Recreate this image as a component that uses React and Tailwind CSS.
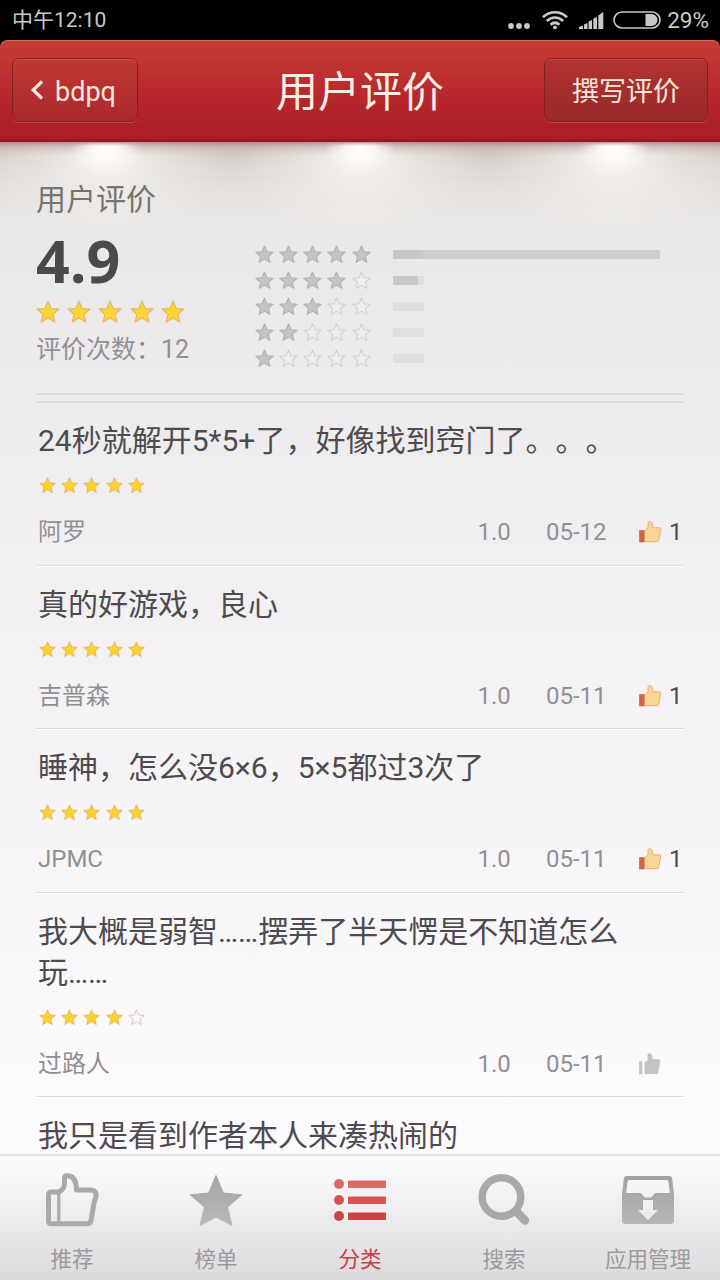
const STAR = 'M12 1.2l3.1 7.2 7.9.7-6 5.2 1.8 7.7-6.8-4.1L5.2 22 7 14.3 1 9.1l7.9-.7z'

const distribution = [
  { stars: 5, bar: 'w-[267px] bg-gradient-to-r from-[#c8c6c9] from-10% to-[#cfcdd0] to-12%' },
  { stars: 4, bar: 'w-[31px] bg-gradient-to-r from-[#c8c6c9] from-78% to-[#e0dee1] to-82%' },
  { stars: 3, bar: 'w-[31px] bg-[#e0dee1]' },
  { stars: 2, bar: 'w-[31px] bg-[#e0dee1]' },
  { stars: 1, bar: 'w-[31px] bg-[#e0dee1]' },
]

const reviews = [
  { text: '24秒就解开5*5+了，好像找到窍门了。。。', rating: 5, user: '阿罗', version: '1.0', date: '05-12', likes: 1 },
  { text: '真的好游戏，良心', rating: 5, user: '吉普森', version: '1.0', date: '05-11', likes: 1 },
  { text: '睡神，怎么没6×6，5×5都过3次了', rating: 5, user: 'JPMC', version: '1.0', date: '05-11', likes: 1 },
  { text: '我大概是弱智……摆弄了半天愣是不知道怎么玩……', rating: 4, user: '过路人', version: '1.0', date: '05-11', likes: 0 },
  { text: '我只是看到作者本人来凑热闹的' },
]

const Star = ({ className }) => (
  <svg viewBox="0 0 24 24" className={className} strokeWidth="1.3" strokeLinejoin="round">
    <path d={STAR} />
  </svg>
)

const Stars = ({ rating, size, gap, on, off }) => (
  <div className={`flex ${gap}`}>
    {[1, 2, 3, 4, 5].map((n) => (
      <Star key={n} className={`${size} shrink-0 ${n <= rating ? on : off}`} />
    ))}
  </div>
)

const ThumbIcon = ({ liked }) => (
  <svg viewBox="0 0 24 24" className="h-6 w-6">
    <path
      d={
        liked
          ? 'M6.500 10.500l3.600-2.300V3.200c0-2.400 3.800-2 4.200.8l.4 3.800h6.800c1.200 0 1.600.7 1.300 1.700l-2.300 11c-.2.8-.6 1.200-1.400 1.200H6.500z'
          : 'M7 10.500l3-2.300V3.200c0-2.400 3.400-2 3.800.8l.4 3.800h6.300c1.200 0 1.600.7 1.300 1.700l-2 11c-.2.800-.6 1.200-1.400 1.200H7z'
      }
      fill={liked ? '#fbd795' : '#c4c2c5'}
      stroke={liked ? '#e3aa70' : '#c4c2c5'}
      strokeWidth="0.9"
    />
    <path d={liked ? 'M1.500 10.500H6V22H1.500z' : 'M1.500 9.500H4V22H1.500z'} fill={liked ? '#d4604e' : '#c4c2c5'} stroke={liked ? '#bd6c55' : '#c4c2c5'} strokeWidth="0.7" />
  </svg>
)

const StatusBar = () => (
  <div className="flex h-10 shrink-0 items-center justify-between bg-black pl-3 pr-3 text-[#c9c9c9]">
    <span className="pt-0.5 text-[21px]">中午12:10</span>
    <div className="flex items-center">
      <svg viewBox="0 0 22 6" className="mr-3 mt-3 h-1.5 w-[22px]" fill="currentColor">
        <circle cx="3" cy="3" r="2.9" />
        <circle cx="11" cy="3" r="2.9" />
        <circle cx="19" cy="3" r="2.9" />
      </svg>
      <svg viewBox="0 0 26 20" className="mr-[11px] h-5 w-[26px]" fill="none" stroke="currentColor" strokeWidth="2.7">
        <path d="M1 7.2c7-6.6 17-6.6 24 0M4.8 11c5-4.7 11.4-4.700 16.4 0M8.500 14.700c3-2.600 6-2.600 9 0" />
        <circle cx="13" cy="17.4" r="1.9" fill="currentColor" stroke="none" />
      </svg>
      <svg viewBox="0 0 25 17" className="mr-[9px] h-[17px] w-[25px]" fill="currentColor">
        <path d="M0 17v-2l4-1.500V17zM5 17v-4.500l3.500-1.500v6zM9.600 17V9.500L13 8v9zM14.300 17V6.500L18 5v12zM19.300 17V3.500l5-3.500v17z" />
      </svg>
      <svg viewBox="0 0 48 18" className="mr-[6px] h-[18px] w-12">
        <rect x="1" y="1" width="46" height="16" rx="8" fill="none" stroke="currentColor" strokeWidth="1.6" />
        <path d="M32.500 3h6a6 6 0 0 1 0 12h-6z" fill="currentColor" />
      </svg>
      <span className="-mr-px pt-0.5 text-[22.500px]">29%</span>
    </div>
  </div>
)

const Header = () => (
  <div className="shrink-0 bg-black">
    <header className="relative z-10 flex h-[102px] items-center justify-between rounded-t-[8px] border-b-[3px] border-[#8f1a20] bg-gradient-to-b from-[#c53d33] via-[#b92a2e] to-[#ab1c25] px-3 shadow-[inset_0_1px_0_#d66a5f]">
      <button className="flex h-16 w-[126px] items-center rounded-[7px] border border-[#85201f] bg-gradient-to-b from-[#bd3831] to-[#ac292d] pl-[17px] text-[27px] text-[#fde6dc] shadow-[inset_0_1px_0_#cc5148,0_1px_0_#c24a45]">
        <svg viewBox="0 0 14 20" className="mr-[11px] h-5 w-3.5" fill="none" stroke="currentColor" strokeWidth="3.2">
          <path d="M12 1.500L3.200 10l8.800 8.500" />
        </svg>
        <span className="pt-1.5">bdpq</span>
      </button>
      <h1 className="absolute left-1/2 -translate-x-1/2 pt-1.5 text-[42px] text-[#fdeee6]">用户评价</h1>
      <button className="flex h-16 w-[164px] items-center justify-center rounded-[7px] border border-[#85201f] bg-gradient-to-b from-[#b23430] to-[#98282a] pt-1.5 text-[27px] text-[#fde6dc] shadow-[inset_0_1px_0_#bf4b43,0_1px_0_#c24a45]">
        撰写评价
      </button>
    </header>
  </div>
)

const Summary = () => (
  <section className="mx-9 flex h-[253px] items-start border-b-2 border-[#dddbde] pt-9">
    <div className="w-[218px]">
      <h2 className="text-[30px] leading-[44px] text-[#77736f]">用户评价</h2>
      <div className="-mt-1 font-['Open_Sans'] text-[59px] font-bold leading-[84px] text-[#4b494c]">4.9</div>
      <div className="-mt-[2px]">
        <Stars rating={5} size="h-6 w-6" gap="gap-[7.2px]" on="fill-[#fdd531] stroke-[#e8ba6a]" off="fill-none stroke-[#cccccc]" />
      </div>
      <div className="mt-2 whitespace-nowrap text-[25px] leading-[36px] text-[#929094]">评价次数：12</div>
    </div>
    <div className="mt-[66.500px] flex flex-col gap-[6px]">
      {distribution.map((row) => (
        <div key={row.stars} className="flex h-5 items-center gap-[22.700px]">
          <div className="pl-[0.500px]">
            <Stars rating={row.stars} size="h-[19px] w-[19px]" gap="gap-[5.300px]" on="fill-[#c6c4c7] stroke-[#b0aeb1]" off="fill-[#efedf0] stroke-[#cfcdd0]" />
          </div>
          <div className={`h-[9px] ${row.bar}`} />
        </div>
      ))}
    </div>
  </section>
)

const Review = ({ review }) => (
  <li className="border-b border-[#dddbde] pb-[16.500px] pl-0.5 pt-[18px] shadow-[0_1px_0_#ffffff] first:pt-[17px] last:border-0 last:pb-0">
    <p className="text-[30px] leading-[41px] text-[#4d4b4e]">{review.text}</p>
    {review.user && (
      <>
        <div className="mt-[16px] pl-px">
          <Stars rating={review.rating} size="h-[17px] w-[17px]" gap="gap-[5.200px]" on="fill-[#fbd32f] stroke-[#e6b55f]" off="fill-none stroke-[#cfc9b6]" />
        </div>
        <div className="mt-[22px] flex h-8 items-center text-[24px] text-[#929094]">
          <span className="flex-1">{review.user}</span>
          <span className="w-[68.500px]">{review.version}</span>
          <span className="w-[92px]">{review.date}</span>
          <div className="flex w-[46px] items-center gap-[7px]">
            <ThumbIcon liked={review.likes > 0} />
            {review.likes > 0 && <span className="text-[#4d4b4e]">{review.likes}</span>}
          </div>
        </div>
      </>
    )}
  </li>
)

const RecommendIcon = () => (
  <svg viewBox="0 0 56 56" className="h-14 w-14" fill="none" stroke="#aaa9ab" strokeWidth="5" strokeLinejoin="round">
    <path d="M4.500 23q0-3 3-3h7q6-2.500 6-8.500V6q0-2.300 2.500-2.300c6.500 0 9.500 5.500 9.500 14.300h14c5 0 6.500 3.500 5 8L50 31l-3 17.500q-.6 3.200-4 3.200H7.500q-3 0-3-3z" />
    <path d="M14.800 21v30" strokeWidth="3.200" />
  </svg>
)

const RankIcon = () => (
  <svg viewBox="0 0 56 56" className="h-14 w-14">
    <defs>
      <linearGradient id="rank" x1="0" y1="0" x2="0" y2="1">
        <stop offset="0" stopColor="#a3a4a5" />
        <stop offset="1" stopColor="#b7b9ba" />
      </linearGradient>
    </defs>
    <path d="M28 3.500l7.300 17.500 18.500 1.800-14.300 12.400L44 53.500 28 45l-16 8.500 4.500-18.300L2.200 22.800 20.700 21z" fill="url(#rank)" stroke="url(#rank)" strokeLinejoin="round" />
  </svg>
)

const CategoryIcon = () => (
  <svg viewBox="0 0 56 56" className="h-14 w-14">
    <g fill="#dc6a60">
      <circle cx="7" cy="12" r="5" />
      <rect x="16" y="8.500" width="38" height="7.500" rx="1" />
    </g>
    <g fill="#d65551">
      <circle cx="7" cy="28" r="5" />
      <rect x="16" y="24.500" width="38" height="7.500" rx="1" />
    </g>
    <g fill="#c94542">
      <circle cx="7" cy="44" r="5" />
      <rect x="16" y="40.500" width="38" height="7.500" rx="1" />
    </g>
  </svg>
)

const SearchIcon = () => (
  <svg viewBox="0 0 56 56" className="h-14 w-14" fill="none" stroke="#a9a8aa">
    <circle cx="25.500" cy="25" r="19.300" strokeWidth="7.400" />
    <path d="M40 39l9 9.500" strokeWidth="8.500" strokeLinecap="round" />
  </svg>
)

const ManageIcon = () => (
  <svg viewBox="0 0 56 56" className="h-14 w-14">
    <defs>
      <linearGradient id="box" x1="0" y1="0" x2="0" y2="1">
        <stop offset="0" stopColor="#a1a0a2" />
        <stop offset="1" stopColor="#b6b7b8" />
      </linearGradient>
    </defs>
    <path
      fillRule="evenodd"
      fill="url(#box)"
      d="M7 4h42q3 0 3.200 3L54 23v26q0 3-3 3H5q-3 0-3-3V23L3.800 7Q4 4 7 4zM9 8q-1.300 0-1.500 1.500L6.200 21H20q2 0 3 2.500l2 2h6l2-2q1-2.500 3-2.500h13.800L48.500 9.500q-.2-1.500-1.500-1.500zM23 28v10h-5L28 48l10-10h-5V28z"
    />
  </svg>
)

const tabs = [
  { label: '推荐', Icon: RecommendIcon },
  { label: '榜单', Icon: RankIcon },
  { label: '分类', Icon: CategoryIcon, active: true },
  { label: '搜索', Icon: SearchIcon },
  { label: '应用管理', Icon: ManageIcon },
]

const TabBar = () => (
  <nav className="grid h-[126px] shrink-0 grid-cols-5 border-t-2 border-[#e6e4e7] bg-gradient-to-b from-[#faf9fb] from-10% via-[#ecebed] via-50% to-[#dcdadd]">
    {tabs.map(({ label, Icon, active }) => (
      <div key={label} className="flex flex-col items-center pt-4">
        <Icon />
        <span className={`mt-4 text-[21.500px] leading-8 ${active ? 'text-[#c93f48]' : 'text-[#9c9a9d]'}`}>{label}</span>
      </div>
    ))}
  </nav>
)

const App = () => {
  return (
    <div className="flex h-[1280px] w-[720px] flex-col overflow-hidden bg-[#fcfbfd] font-['Roboto','Noto_Sans_CJK_SC',sans-serif] [text-spacing-trim:space-all]" lang="zh-CN">
      <StatusBar />
      <Header />
      <main className="relative min-h-0 flex-1 overflow-hidden bg-gradient-to-b from-[#e9e7e8] from-8% via-[#f3f1f4] via-50% to-[#fcfafd] to-95%">
        {/* shadow under the header and the three lamps */}
        <div className="absolute inset-x-0 top-0 h-[100px] bg-[linear-gradient(to_bottom,#b98a88_0,#c9b5b1_5px,#d3c9c4_12px,#dcd7d2_25px,#e4e1de_45px,#e9e7e6_75px,transparent_100px)]" />
        <div className="absolute inset-x-0 top-0 h-[110px] bg-[radial-gradient(ellipse_120px_95px_at_106px_12px,#f6f4ef_0,#f3f1ecd0_25%,#f0eee980_55%,#f0eee900_100%),radial-gradient(ellipse_120px_95px_at_360px_12px,#f6f4ef_0,#f3f1ecd0_25%,#f0eee980_55%,#f0eee900_100%),radial-gradient(ellipse_120px_95px_at_614px_12px,#f6f4ef_0,#f3f1ecd0_25%,#f0eee980_55%,#f0eee900_100%)] [mask-image:linear-gradient(to_bottom,transparent_0,#000_14px)]" />
        <div className="absolute inset-x-0 top-0 h-[50px] bg-[radial-gradient(ellipse_36px_30px_at_106px_5px,#fffef9_0,#fefcf6e0_35%,#fefcf600_100%),radial-gradient(ellipse_36px_30px_at_360px_5px,#fffef9_0,#fefcf6e0_35%,#fefcf600_100%),radial-gradient(ellipse_36px_30px_at_614px_5px,#fffef9_0,#fefcf6e0_35%,#fefcf600_100%)] [mask-image:linear-gradient(to_bottom,transparent_0,#000_4px)]" />
        <div className="relative">
          <Summary />
          <ul className="mx-9 mt-[6px] border-t-2 border-[#dddbde]">
            {reviews.map((review) => (
              <Review key={review.text} review={review} />
            ))}
          </ul>
        </div>
      </main>
      <TabBar />
    </div>
  )
}

export default App
